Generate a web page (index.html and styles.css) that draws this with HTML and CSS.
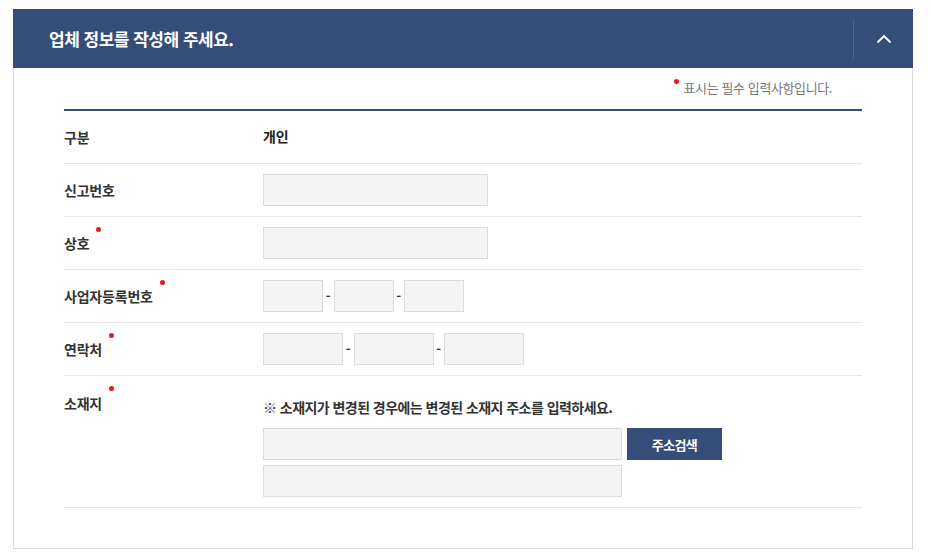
FILE: index.html
```html
<!DOCTYPE html>
<html lang="ko">
<head>
    <meta charset="UTF-8">
    <meta name="viewport" content="width=device-width, initial-scale=1.0">
    <title>업체 정보 작성</title>
    <link rel="stylesheet" href="styles.css">
</head>
<body>
    <div class="panel">
        <div class="panel-head">
            <h2 class="panel-title">업체 정보를 작성해 주세요.</h2>
            <button type="button" class="toggle" aria-label="접기">
                <svg width="16" height="10" viewBox="0 0 16 10"><polyline points="1.5,8.5 8,2 14.5,8.5" fill="none" stroke="#fff" stroke-width="1.8"/></svg>
            </button>
        </div>
        <div class="panel-body">
            <p class="req-note"><span class="dot"></span>표시는 필수 입력사항입니다.</p>
            <div class="form-table">
                <div class="row">
                    <div class="th">구분</div>
                    <div class="td"><strong class="value">개인</strong></div>
                </div>
                <div class="row">
                    <div class="th">신고번호</div>
                    <div class="td"><input type="text" class="ipt w225"></div>
                </div>
                <div class="row">
                    <div class="th">상호<span class="dot"></span></div>
                    <div class="td"><input type="text" class="ipt w225"></div>
                </div>
                <div class="row">
                    <div class="th">사업자등록번호<span class="dot"></span></div>
                    <div class="td">
                        <input type="text" class="ipt w60"><span class="dash">-</span><input type="text" class="ipt w60"><span class="dash">-</span><input type="text" class="ipt w60">
                    </div>
                </div>
                <div class="row">
                    <div class="th">연락처<span class="dot"></span></div>
                    <div class="td">
                        <input type="text" class="ipt w80"><span class="dash">-</span><input type="text" class="ipt w80"><span class="dash">-</span><input type="text" class="ipt w80">
                    </div>
                </div>
                <div class="row row-top">
                    <div class="th">소재지<span class="dot"></span></div>
                    <div class="td td-col">
                        <p class="addr-note">※ 소재지가 변경된 경우에는 변경된 소재지 주소를 입력하세요.</p>
                        <div class="addr-line">
                            <input type="text" class="ipt w359">
                            <button type="button" class="btn-addr">주소검색</button>
                        </div>
                        <input type="text" class="ipt w359">
                    </div>
                </div>
            </div>
        </div>
    </div>
</body>
</html>
```

FILE: styles.css
```css
body {
    margin: 0;
    padding: 9px 0 0 13px;
    background: #fff;
    font-family: "Noto Sans CJK KR", "Noto Sans", sans-serif;
    color: #333;
}
.panel {
    width: 900px;
}
.panel-head {
    display: flex;
    align-items: center;
    height: 59px;
    background-color: #344d79;
}
.panel-title {
    flex: 1;
    margin: 0;
    padding-left: 36px;
    color: #fff;
    font-size: 17px;
    font-weight: bold;
    letter-spacing: -0.5px;
    line-height: 24px;
}
.toggle {
    display: flex;
    align-items: center;
    justify-content: center;
    width: 60px;
    height: 40px;
    padding: 0;
    border: none;
    border-left: 1px solid rgba(255, 255, 255, 0.13);
    background: none;
    cursor: pointer;
}
.panel-body {
    border: 1px solid #d9d9d9;
    border-top: none;
    padding: 0 50px 40px;
}
.req-note {
    margin: 0;
    padding: 10px 30px 11px 0;
    text-align: right;
    font-size: 13px;
    line-height: 20px;
    color: #777;
    letter-spacing: -0.4px;
}
.dot {
    display: inline-block;
    width: 5px;
    height: 5px;
    border-radius: 50%;
    background-color: #e8161d;
    vertical-align: top;
}
.req-note .dot {
    margin: 1px 5px 0 0;
}
.form-table {
    border-top: 2px solid #344d79;
}
.row {
    display: flex;
    padding: 10px 0;
    border-bottom: 1px solid #e8e8e8;
}
.th {
    width: 199px;
    flex-shrink: 0;
    font-size: 14px;
    font-weight: bold;
    line-height: 32px;
    color: #333;
    letter-spacing: -0.2px;
}
.th .dot {
    margin-left: 7px;
}
.row-top .th {
    line-height: 34px;
}
.td {
    flex: 1;
    display: flex;
    align-items: center;
    min-height: 32px;
}
.td-col {
    flex-direction: column;
    align-items: flex-start;
}
.value {
    font-size: 14px;
    color: #222;
    letter-spacing: -0.2px;
    margin-top: -3px;
}
.ipt {
    box-sizing: border-box;
    height: 32px;
    margin: 0;
    padding: 0 8px;
    border: 1px solid #dcdcdc;
    background-color: #f4f4f4;
    font-family: inherit;
    outline: none;
}
.w60 { width: 60px; }
.w80 { width: 80px; }
.w225 { width: 225px; }
.w359 { width: 359px; }
.dash {
    width: 10.5px;
    text-align: center;
    font-size: 13px;
    font-weight: bold;
    line-height: 32px;
    color: #333;
}
.addr-note {
    margin: 0;
    padding: 11px 0;
    font-size: 14px;
    font-weight: bold;
    line-height: 20px;
    letter-spacing: -0.55px;
    color: #333;
}
.addr-line {
    display: flex;
    gap: 5px;
    margin-bottom: 5px;
}
.btn-addr {
    width: 95px;
    height: 32px;
    border: none;
    background-color: #344d79;
    color: #fff;
    font-family: inherit;
    font-size: 13px;
    font-weight: bold;
    letter-spacing: -0.6px;
    cursor: pointer;
}
```
